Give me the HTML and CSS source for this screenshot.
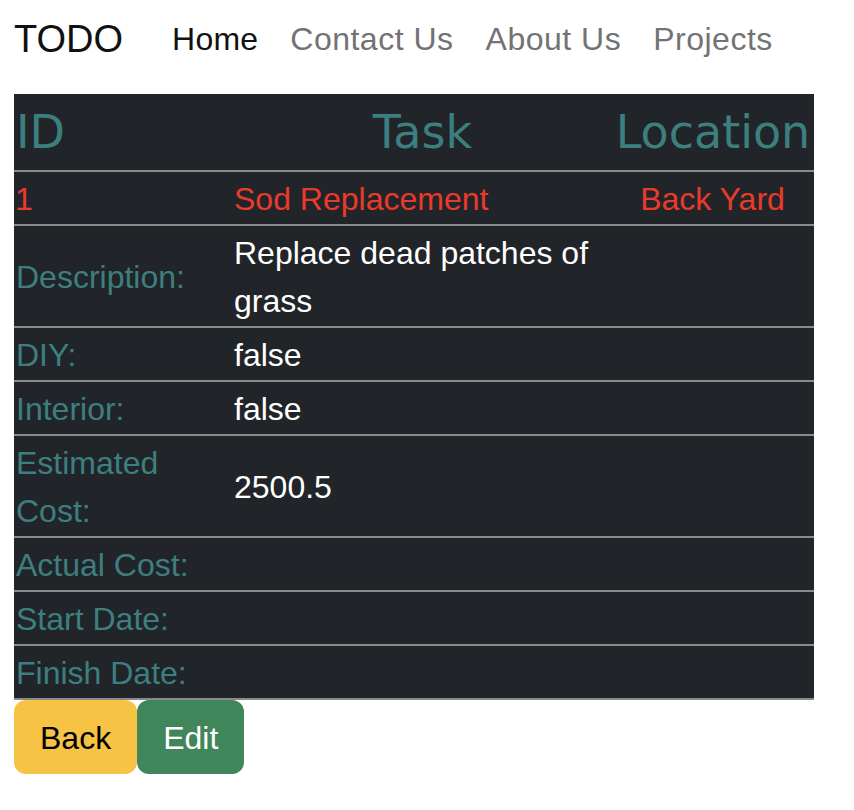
FILE: index.html
```html
<!DOCTYPE html>
<html>
<head>
<meta charset="utf-8">
<link rel="stylesheet" href="styles.css">
</head>
<body>
<nav class="navbar">
  <span class="brand">TODO</span>
  <a class="nav-link active">Home</a>
  <a class="nav-link">Contact Us</a>
  <a class="nav-link">About Us</a>
  <a class="nav-link">Projects</a>
</nav>
<main class="content">
  <table class="detail">
    <colgroup><col class="c1"><col class="c2"><col class="c3"></colgroup>
    <thead>
      <tr><th class="left">ID</th><th class="center">Task</th><th class="center">Location</th></tr>
    </thead>
    <tbody>
      <tr class="red"><td>1</td><td>Sod Replacement</td><td class="center">Back Yard</td></tr>
      <tr><td class="label">Description:</td><td>Replace dead patches of grass</td><td></td></tr>
      <tr><td class="label">DIY:</td><td>false</td><td></td></tr>
      <tr><td class="label">Interior:</td><td>false</td><td></td></tr>
      <tr><td class="label">Estimated Cost:</td><td>2500.5</td><td></td></tr>
      <tr><td class="label">Actual Cost:</td><td></td><td></td></tr>
      <tr><td class="label">Start Date:</td><td></td><td></td></tr>
      <tr><td class="label">Finish Date:</td><td></td><td></td></tr>
    </tbody>
  </table>
  <div class="actions">
    <button class="btn btn-back">Back</button>
    <button class="btn btn-edit">Edit</button>
  </div>
</main>
</body>
</html>
```
FILE: styles.css
```css
html, body {
  margin: 0;
  padding: 0;
  background: #fff;
  font-family: "Liberation Sans", Arial, sans-serif;
  font-size: 32px;
  line-height: 48px;
}
.navbar {
  display: flex;
  align-items: center;
  padding: 15px 14px 31px 14px;
}
.brand {
  font-size: 38px;
  color: #111;
  margin-right: 33px;
  line-height: 48px;
}
.nav-link {
  color: #737373;
  padding: 0 16px;
  letter-spacing: 0.5px;
}
.nav-link.active {
  color: #111;
  letter-spacing: 0.2px;
}
.content {
  padding: 0 14px;
}
.detail {
  width: 800px;
  border-collapse: collapse;
  background: #212529;
  table-layout: fixed;
}
.c1 { width: 219px; }
.c2 { width: 379px; }
.c3 { width: 202px; }
.detail th {
  font-family: "DejaVu Sans", Verdana, sans-serif;
  font-weight: normal;
  font-size: 46px;
  line-height: 72px;
  color: #3d7f7f;
  padding: 2px 2px;
  border-bottom: 2px solid #8a8a8a;
}
.detail td {
  padding: 3px 2px 1px 1px;
  border-bottom: 2px solid #8a8a8a;
  color: #fff;
  vertical-align: middle;
}
.detail td.label {
  color: #3d7f7f;
  padding-left: 2px;
}
.detail tr.red td {
  color: #ea3a2b;
}
.left { text-align: left; }
.center { text-align: center; }
.actions {
  display: flex;
}
.btn {
  font-family: "Liberation Sans", Arial, sans-serif;
  font-size: 32px;
  line-height: 48px;
  padding: 14px 26px 12px;
  border: none;
  border-radius: 12px;
  margin: 0;
}
.btn-back {
  background: #f6c344;
  color: #000;
}
.btn-edit {
  background: #41855a;
  color: #fff;
}
```
